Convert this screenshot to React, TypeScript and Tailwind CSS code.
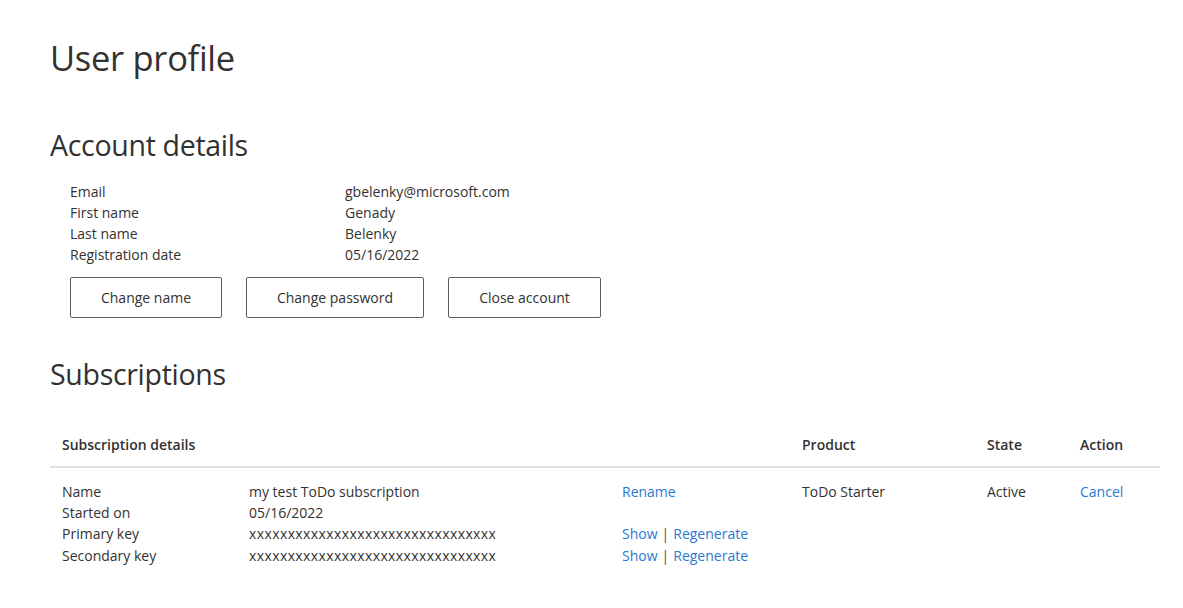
const account = [
  ["Email", "gbelenky@microsoft.com"],
  ["First name", "Genady"],
  ["Last name", "Belenky"],
  ["Registration date", "05/16/2022"],
];

const keys = "xxxxxxxxxxxxxxxxxxxxxxxxxxxxxxxx";

function KeyLinks() {
  return (
    <span>
      <a className="text-[#2b78d4]">Show</a>
      <span className="px-1 text-[#6b4a3a]">|</span>
      <a className="text-[#2b78d4]">Regenerate</a>
    </span>
  );
}

export default function App() {
  return (
    <div className="min-h-screen bg-white px-[50px] pt-[34px] font-['Open_Sans',sans-serif] text-[14px] text-[#323130]">
      <h1 className="text-[34.5px] leading-[48px] tracking-[-0.3px]">User profile</h1>

      <h2 className="mt-[42px] text-[28.5px] leading-[42px] tracking-[-0.3px]">Account details</h2>
      <div className="mt-[15px] pl-[20px]">
        {account.map(([label, value]) => (
          <div key={label} className="flex h-[21px] items-center">
            <span className="w-[275px]">{label}</span>
            <span>{value}</span>
          </div>
        ))}
        <div className="mt-[12px] flex gap-[24px]">
          <button className="h-[41px] w-[152px] rounded-[2px] border border-[#605e5c] bg-white">Change name</button>
          <button className="h-[41px] w-[178px] rounded-[2px] border border-[#605e5c] bg-white">Change password</button>
          <button className="h-[41px] w-[153px] rounded-[2px] border border-[#605e5c] bg-white">Close account</button>
        </div>
      </div>

      <h2 className="mt-[35px] text-[28.5px] leading-[42px] tracking-[-0.3px]">Subscriptions</h2>

      <table className="mt-[27px] w-[1110px] border-collapse">
        <thead>
          <tr className="border-b-2 border-[#dee2e6] text-left font-semibold">
            <th className="h-[45px] pl-[12px] font-semibold">Subscription details</th>
            <th className="w-[185px] pl-0 font-semibold">Product</th>
            <th className="w-[93px] font-semibold">State</th>
            <th className="w-[80px] font-semibold">Action</th>
          </tr>
        </thead>
        <tbody>
          <tr className="align-top">
            <td className="pt-[13px] pl-[12px]">
              <div className="grid grid-cols-[187px_373px_1fr]">
                <div className="leading-[21px]">Name</div>
                <div className="leading-[21px]">my test ToDo subscription</div>
                <div className="leading-[21px] text-[#2b78d4]">Rename</div>
                <div className="leading-[21px]">Started on</div>
                <div className="leading-[21px]">05/16/2022</div>
                <div />
                <div className="leading-[22px]">Primary key</div>
                <div className="text-[14px] leading-[22px] tracking-[0.4px]">{keys}</div>
                <div className="leading-[22px]"><KeyLinks /></div>
                <div className="leading-[22px]">Secondary key</div>
                <div className="text-[14px] leading-[22px] tracking-[0.4px]">{keys}</div>
                <div className="leading-[22px]"><KeyLinks /></div>
              </div>
            </td>
            <td className="pt-[13px] leading-[21px]">ToDo Starter</td>
            <td className="pt-[13px] leading-[21px]">Active</td>
            <td className="pt-[13px] leading-[21px] text-[#2b78d4]">Cancel</td>
          </tr>
        </tbody>
      </table>
    </div>
  );
}
